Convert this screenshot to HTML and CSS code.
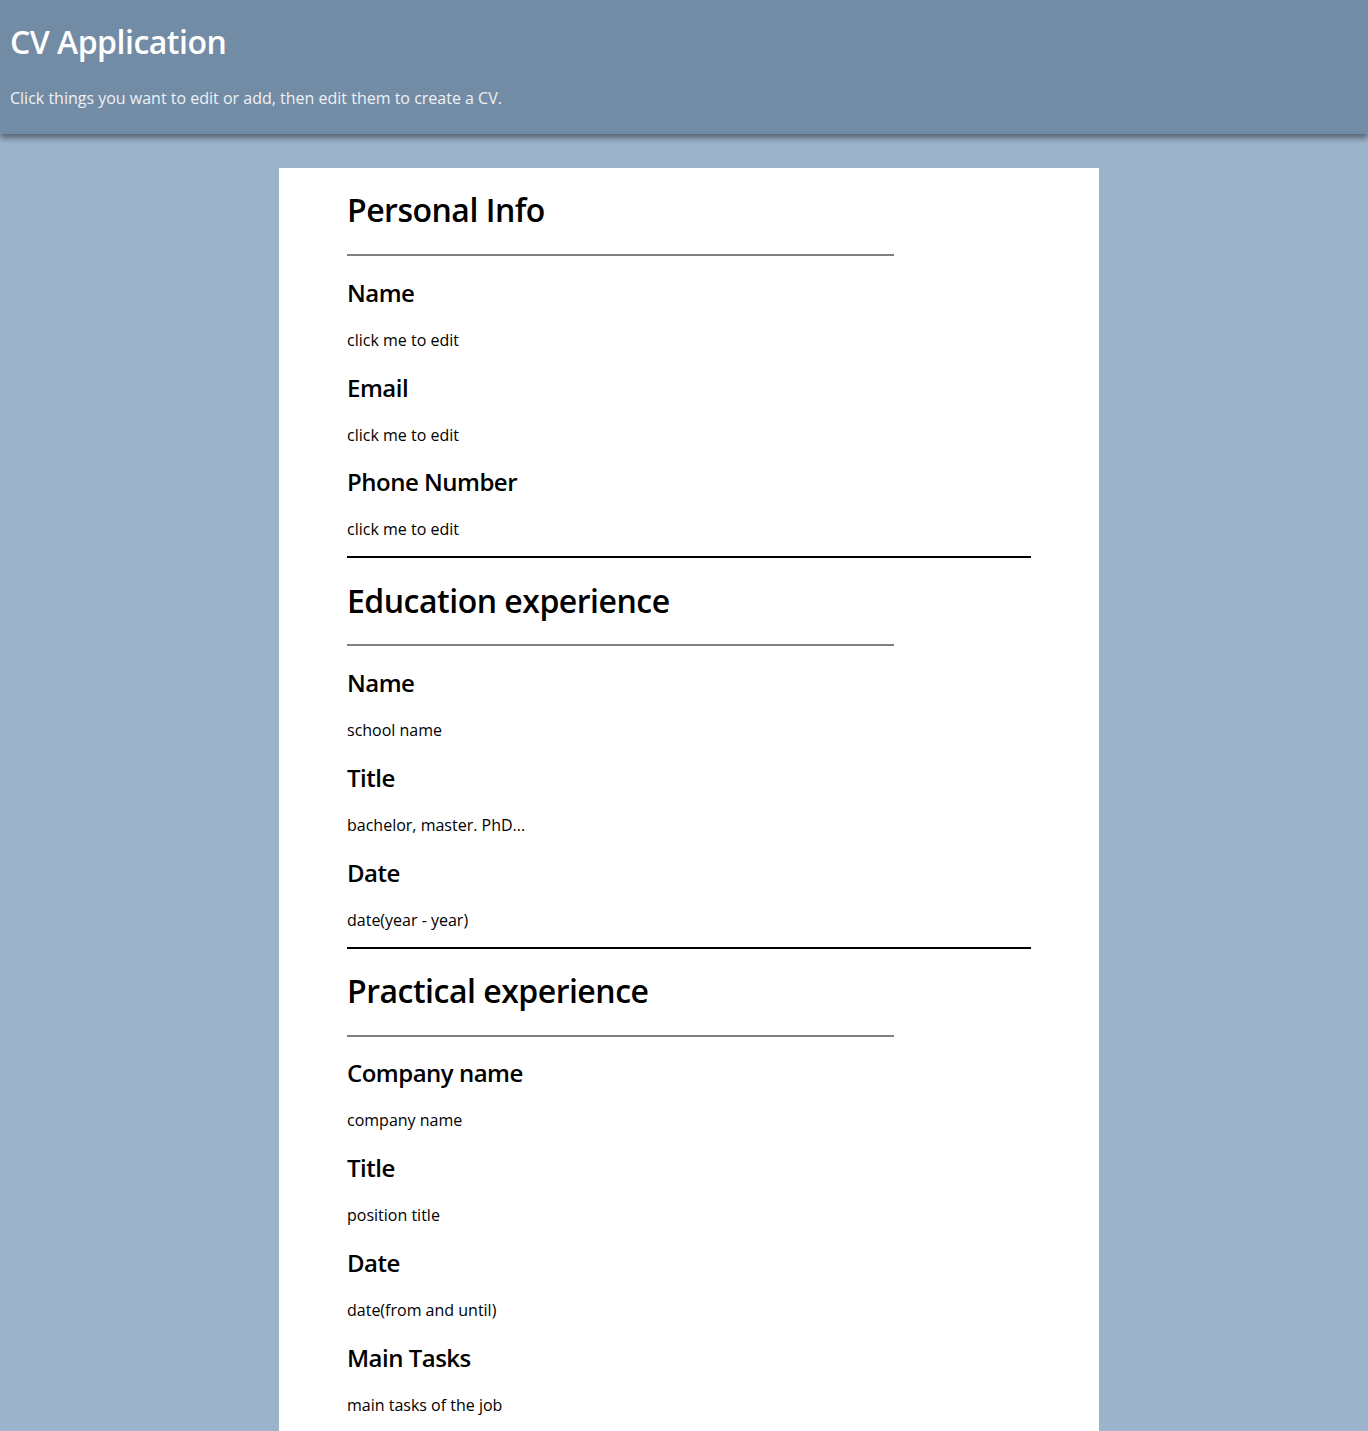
FILE: index.html
```html
<!DOCTYPE html>
<html lang="en">
<head>
<meta charset="utf-8">
<title>CV Application</title>
<link rel="stylesheet" href="styles.css">
</head>
<body>
<header class="top">
  <h1 class="top-title">CV Application</h1>
  <p class="top-sub">Click things you want to edit or add, then edit them to create a CV.</p>
</header>
<div class="page">
  <main class="card">
    <section class="section">
      <h1 class="sec-title">Personal Info</h1>
      <hr class="sec-rule">
      <h2 class="field">Name</h2>
      <p class="value">click me to edit</p>
      <h2 class="field">Email</h2>
      <p class="value">click me to edit</p>
      <h2 class="field">Phone Number</h2>
      <p class="value">click me to edit</p>
    </section>
    <section class="section">
      <h1 class="sec-title">Education experience</h1>
      <hr class="sec-rule">
      <h2 class="field">Name</h2>
      <p class="value">school name</p>
      <h2 class="field">Title</h2>
      <p class="value">bachelor, master. PhD...</p>
      <h2 class="field">Date</h2>
      <p class="value">date(year - year)</p>
    </section>
    <section class="section">
      <h1 class="sec-title">Practical experience</h1>
      <hr class="sec-rule">
      <h2 class="field">Company name</h2>
      <p class="value">company name</p>
      <h2 class="field">Title</h2>
      <p class="value">position title</p>
      <h2 class="field">Date</h2>
      <p class="value">date(from and until)</p>
      <h2 class="field">Main Tasks</h2>
      <p class="value">main tasks of the job</p>
    </section>
  </main>
</div>
</body>
</html>
```
FILE: styles.css
```css
html, body {
  margin: 0;
  padding: 0;
}
body {
  background: #9cb3cc;
  font-family: "Open Sans", "Noto Sans", sans-serif;
  color: #000;
}
.top {
  background: #728ca6;
  color: #fff;
  padding: 1px 10px;
  height: 132px;
  box-shadow: 0 4px 6px rgba(0, 0, 0, 0.45);
  position: relative;
}
.top-title {
  font-size: 32px;
  font-weight: 600;
  letter-spacing: -0.5px;
  margin: 19.44px 0 23.44px;
}
.top-sub {
  font-size: 16px;
  margin: 14px 0 0;
  color: #eef1f5;
}
.page {
  padding-left: 10px;
}
.card {
  display: flow-root;
  background: #fff;
  width: 684px;
  margin: 34px auto 0;
  padding: 0 68px 20px;
}
.section {
  border-bottom: 2px solid #000;
}
.section:last-child {
  border-bottom: none;
}
.sec-title {
  font-size: 32px;
  font-weight: 600;
  letter-spacing: -0.5px;
  margin: 20.44px 0 22.44px;
}
.sec-rule {
  width: 80%;
  margin: 0;
  border: none;
  border-top: 2px solid #808080;
}
.field {
  font-size: 24px;
  font-weight: 600;
  letter-spacing: -0.5px;
  margin: 19.92px 0;
}
.value {
  font-size: 16px;
  margin: 16px 0;
}
```
